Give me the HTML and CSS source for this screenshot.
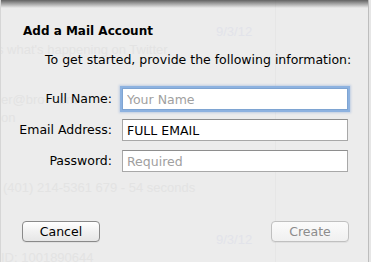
FILE: index.html
```html
<!DOCTYPE html>
<html lang="en">
<head>
  <meta charset="UTF-8">
  <title>Add a Mail Account</title>
  <link rel="stylesheet" href="styles.css">
</head>
<body>
  <div id="sheet">
    <!-- window content showing through the sheet -->
    <div class="ghost">
      <div class="ghostLine"></div>
      <span class="ghostText blue" style="left: 215px; top: 24px;">9/3/12</span>
      <span class="ghostText" style="left: -4px; top: 42px;">s what's happening on Twitter</span>
      <span class="ghostText" style="left: 0px; top: 92px;">er@bro&nbsp;&nbsp;&nbsp;&nbsp;om</span>
      <span class="ghostText" style="left: 0px; top: 110px;">on</span>
      <span class="ghostText" style="left: 2px; top: 180px;">(401) 214-5361 679 - 54 seconds</span>
      <span class="ghostText blue" style="left: 215px; top: 232px;">9/3/12</span>
      <span class="ghostText" style="left: 0px; top: 250px;">ID: 1001890644</span>
    </div>

    <div id="sheetContent">
      <h1 id="sheetTitle">Add a Mail Account</h1>
      <p id="sheetIntro">To get started, provide the following information:</p>

      <form id="accountForm" autocomplete="off">
        <label for="fullName">Full Name:</label>
        <input id="fullName" class="field focused" type="text" placeholder="Your Name">

        <label for="emailAddress">Email Address:</label>
        <input id="emailAddress" class="field" type="text" value="FULL EMAIL">

        <label for="password">Password:</label>
        <input id="password" class="field" type="password" placeholder="Required">
      </form>

      <div id="buttonRow">
        <button type="button" class="sheetButton">Cancel</button>
        <button type="button" class="sheetButton" disabled>Create</button>
      </div>
    </div>
  </div>
</body>
</html>
```

FILE: styles.css
```css
html, body {
  margin: 0;
  padding: 0;
}

body {
  width: 371px;
  height: 262px;
  overflow: hidden;
  background-color: #e6e6e6;
  font-family: "DejaVu Sans", Verdana, sans-serif;
  font-size: 12.5px;
  color: #000;
}

#sheet {
  position: relative;
  box-sizing: border-box;
  width: 369px;
  height: 262px;
  background-color: #ececec;
  border-left: 1px solid #d6d6d6;
  border-right: 1px solid #bdbdbd;
  overflow: hidden;
}

/* dark shadow under the window title bar */
#sheet::before {
  content: "";
  position: absolute;
  top: 0;
  left: 0;
  right: 0;
  height: 8px;
  background: linear-gradient(rgba(40, 40, 40, 0.7), rgba(40, 40, 40, 0));
  z-index: 2;
}

.ghost {
  position: absolute;
  inset: 0;
  z-index: 0;
}

.ghostLine {
  position: absolute;
  top: 0;
  bottom: 0;
  left: 274px;
  width: 1px;
  background-color: #e6e6e6;
}

.ghostText {
  position: absolute;
  white-space: nowrap;
  font-family: "Liberation Sans", Arial, sans-serif;
  font-size: 13px;
  color: #e3e3e3;
}

.ghostText.blue {
  color: #e2e3ea;
}

#sheetContent {
  position: relative;
  z-index: 1;
  padding: 23px 0 0 0;
}

#sheetTitle {
  margin: 0 0 0 22px;
  font-size: 12px;
  line-height: 16px;
  font-weight: bold;
}

#sheetIntro {
  margin: 13px 0 0 44px;
  font-size: 12.5px;
  line-height: 16px;
  white-space: nowrap;
}

#accountForm {
  display: grid;
  grid-template-columns: 111px 226px;
  column-gap: 10px;
  row-gap: 9px;
  align-items: center;
  margin-top: 20px;
}

#accountForm label {
  text-align: right;
  line-height: 16px;
}

.field {
  box-sizing: border-box;
  height: 22px;
  margin: 0;
  padding: 0 0 0 4px;
  border: 1px solid #a8a8a8;
  border-top-color: #8e8e8e;
  background-color: #fff;
  font-family: inherit;
  font-size: 12.5px;
  color: #000;
  outline: none;
}

.field::placeholder {
  color: #a0a0a0;
}

.field.focused {
  border-color: #7ea4d2;
  box-shadow: 0 0 0 2px #8db2e0, 0 0 2px 3px rgba(110, 150, 210, 0.35);
}

#buttonRow {
  display: flex;
  justify-content: space-between;
  width: 327px;
  margin: 49px 0 0 21px;
}

.sheetButton {
  box-sizing: border-box;
  width: 78px;
  height: 21px;
  padding: 0;
  border: 1px solid #8a8a8a;
  border-radius: 4px;
  background: linear-gradient(#ffffff, #f1f1f1 50%, #e6e6e6);
  font-family: inherit;
  font-size: 12.5px;
  color: #000;
  box-shadow: 0 1px 0 rgba(0, 0, 0, 0.05);
}

.sheetButton:disabled {
  border-color: #c0c0c0;
  background: linear-gradient(#fbfbfb, #f0f0f0);
  color: #8c8c8c;
}
```
